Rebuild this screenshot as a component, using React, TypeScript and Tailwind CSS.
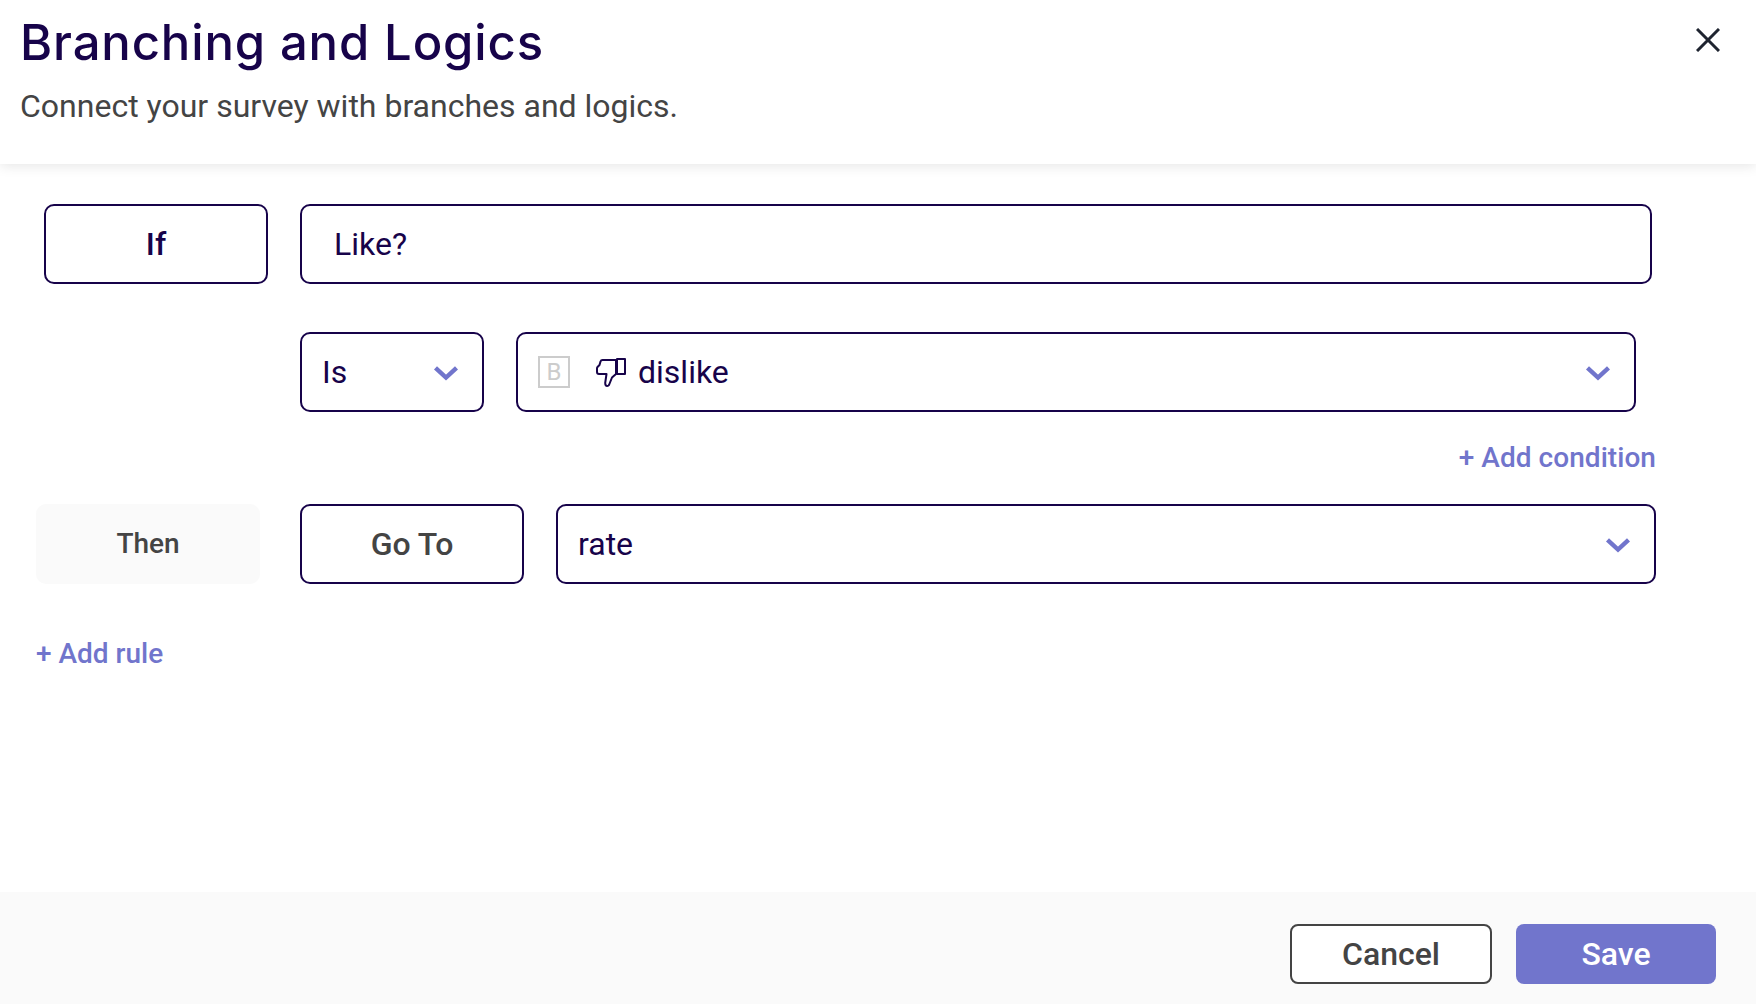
const Chevron = () => (
  <svg width="26" height="16" viewBox="0 0 26 16" fill="none" className="mt-[1px] shrink-0">
    <path d="M2.5 2.8 L13 12.6 L23.5 2.8" stroke="#7175cc" strokeWidth="4.4" />
  </svg>
);

const DislikeIcon = () => (
  <svg width="40" height="40" viewBox="0 0 40 40" fill="none" stroke="#17034a" strokeWidth="2" strokeLinejoin="round" className="ml-[20px] shrink-0">
    <path d="M26 8 H12.5 Q11 8 10.5 9.5 L9.5 13 L7.5 15 Q7 15.5 7 16.5 V20 Q7 22 9 22 H16.5 L15.2 31 Q15.2 34 17.2 34 Q18.4 34 19 33 L22 25.5 L26 22 Z" />
    <rect x="27" y="7" width="8" height="15" />
  </svg>
);

const X = () => (
  <svg width="24" height="24" viewBox="0 0 24 24" fill="none" stroke="#1f2430" strokeWidth="3" className="block">
    <path d="M1 1 L23 23 M23 1 L1 23" />
  </svg>
);

export default function App() {
  return (
    <div className="flex h-[1004px] w-[1756px] flex-col overflow-hidden bg-white font-['Roboto',sans-serif]">
      {/* Header */}
      <div className="relative z-10 flex h-[164px] shrink-0 justify-between bg-white pl-[20px] pr-[36px] shadow-[0_2px_12px_rgba(0,0,0,0.1)]">
        <div>
          <h1 className="mt-[15px] text-[49px] font-medium leading-[56px] tracking-[0.87px] text-[#17034a] font-['Inter',sans-serif]">
            Branching and Logics
          </h1>
          <p className="mt-[15px] text-[32px] leading-[40px] text-[#444444]">Connect your survey with branches and logics.</p>
        </div>
        <button className="mt-[28px] h-[24px] w-[24px]">
          <X />
        </button>
      </div>

      {/* Rules */}
      <div className="flex flex-1 flex-col pl-[36px] pt-[40px]">
        <div className="flex gap-[32px] pl-[8px]">
          <div className="flex h-[80px] w-[224px] items-center justify-center rounded-[10px] border-2 border-[#17034a] text-[32px] font-medium text-[#17034a]">
            If
          </div>
          <div className="flex h-[80px] w-[1352px] items-center rounded-[10px] border-2 border-[#17034a] pl-[32px] text-[32px] text-[#17034a]">
            Like?
          </div>
        </div>

        <div className="mt-[48px] flex gap-[32px] pl-[264px]">
          <div className="flex h-[80px] w-[184px] items-center justify-between rounded-[10px] border-2 border-[#17034a] pl-[20px] pr-[23px] text-[32px] text-[#17034a]">
            Is
            <Chevron />
          </div>
          <div className="flex h-[80px] w-[1120px] items-center rounded-[10px] border-2 border-[#17034a] pl-[20px] pr-[23px] text-[32px] text-[#17034a]">
            <span className="flex h-[32px] w-[32px] items-center justify-center border-2 border-[#cccccc] text-[24px] text-[#cccccc]">
              B
            </span>
            <DislikeIcon />
            <span className="ml-[8px] flex-1">dislike</span>
            <Chevron />
          </div>
        </div>

        <div className="mt-[26px] w-[1620px] text-right text-[28px] font-medium leading-[40px] tracking-[0.05px] text-[#7175cc]">+ Add condition</div>

        <div className="mt-[26px] flex items-center gap-[32px]">
          <div className="flex h-[80px] w-[224px] items-center justify-center rounded-[10px] bg-[#fafafa] text-[28px] font-medium text-[#444444]">
            Then
          </div>
          <div className="ml-[8px] flex h-[80px] w-[224px] items-center justify-center rounded-[10px] border-2 border-[#17034a] text-[32px] font-medium text-[#444444]">
            Go To
          </div>
          <div className="flex h-[80px] w-[1100px] items-center justify-between rounded-[10px] border-2 border-[#17034a] pl-[20px] pr-[23px] text-[32px] text-[#17034a]">
            rate
            <Chevron />
          </div>
        </div>

        <div className="mt-[50px] text-[28px] font-medium leading-[40px] text-[#7175cc]">+ Add rule</div>
      </div>

      {/* Footer */}
      <div className="flex h-[112px] shrink-0 items-start justify-end gap-[24px] bg-[#fafafa] pr-[40px] pt-[32px]">
        <button className="h-[60px] w-[202px] rounded-[8px] border-2 border-[#444444] bg-white text-[32px] font-medium text-[#444444]">
          Cancel
        </button>
        <button className="h-[60px] w-[200px] rounded-[8px] bg-[#7175cc] text-[32px] font-medium text-white">Save</button>
      </div>
    </div>
  );
}
